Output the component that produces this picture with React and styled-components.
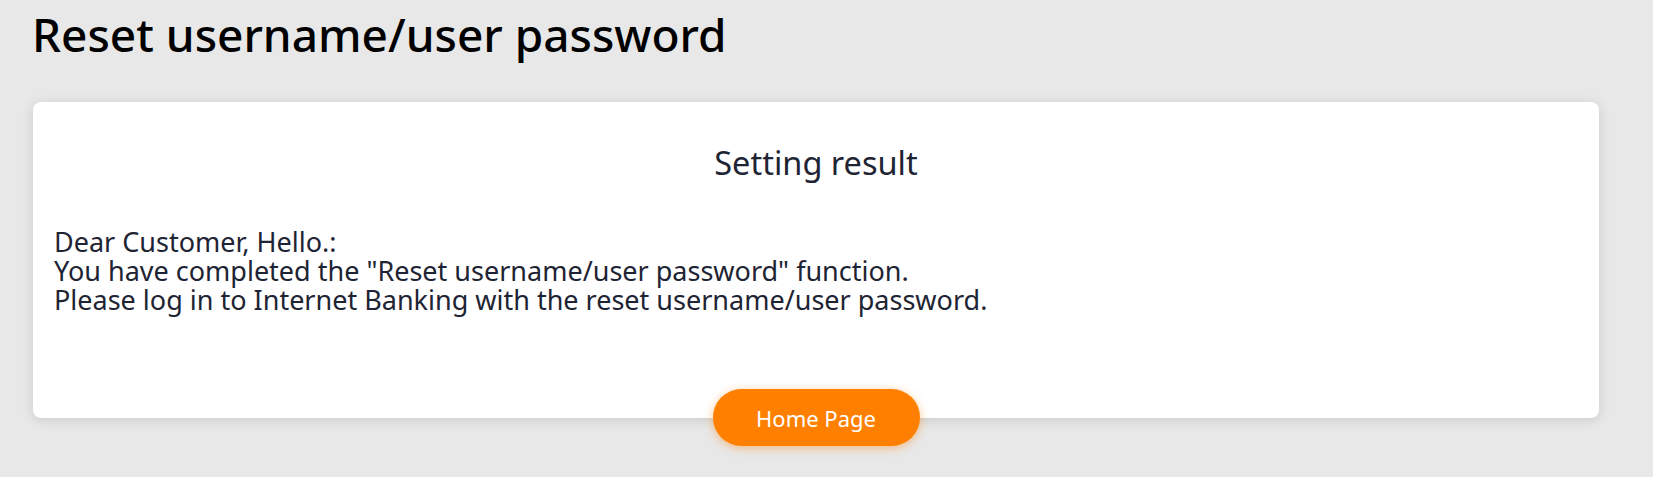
import React from 'react';
import styled, { createGlobalStyle } from 'styled-components';

const GlobalStyle = createGlobalStyle`
body {
    margin: 0;
    background: #e8e8e8;
    font-family: "Noto Sans", "Open Sans", sans-serif;
    color: #1e2433;
}
`;

export default function App() {
    return (
        <>
            <GlobalStyle />
            <Page>
                <Title>Reset username/user password</Title>
                <Card>
                    <CardTitle>Setting result</CardTitle>
                    <Message>
                        Dear Customer, Hello.:<br />
                        You have completed the "Reset username/user password" function.<br />
                        Please log in to Internet Banking with the reset username/user password.
                    </Message>
                    <Actions>
                        <HomeButton type="button">Home Page</HomeButton>
                    </Actions>
                </Card>
            </Page>
        </>
    );
}

const Page = styled.div`
display: flex;
flex-direction: column;
gap: 40px;
padding: 7px 54px 40px 32px;
`;

const Title = styled.h1`
margin: 0;
font-size: 46px;
font-weight: 500;
line-height: 1.2;
color: #000;
`;

const Card = styled.section`
display: flex;
flex-direction: column;
background: #fff;
border-radius: 8px;
box-shadow: 0 2px 12px rgba(0, 0, 0, 0.13);
padding: 41px 21px 0;
margin-left: 1px;
`;

const CardTitle = styled.h2`
margin: 0 0 45px;
text-align: center;
font-size: 32.5px;
font-weight: 400;
line-height: 1.2;
`;

const Message = styled.p`
margin: 0;
font-size: 27px;
line-height: 29px;
`;

const Actions = styled.div`
display: flex;
justify-content: center;
margin-top: 75px;
margin-bottom: -28px;
`;

const HomeButton = styled.button`
width: 207px;
height: 57px;
border: none;
border-radius: 29px;
background: #ff8000;
color: #fff;
font-family: inherit;
font-size: 22px;
cursor: pointer;
box-shadow: 0 2px 10px rgba(255, 128, 0, 0.45);
`;
